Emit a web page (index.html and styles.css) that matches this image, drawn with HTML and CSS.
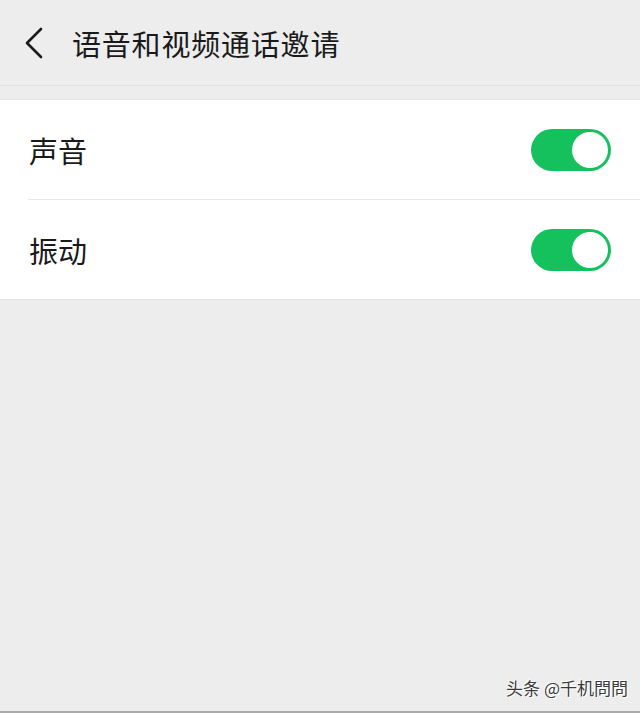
FILE: index.html
```html
<!DOCTYPE html>
<html lang="zh-CN">
<head>
  <meta charset="UTF-8" />
  <meta name="viewport" content="width=device-width, initial-scale=1.0"/>
  <title>语音和视频通话邀请</title>
  <link rel="stylesheet" href="styles.css">
</head>
<body>
  <div class="screen">
    <header class="top-bar">
      <span class="back">
        <svg width="20" height="32" viewBox="0 0 20 32">
          <path d="M17 2 L3 16 L17 30" fill="none" stroke="#1a1a1a" stroke-width="2.6" stroke-linecap="round" stroke-linejoin="round"/>
        </svg>
      </span>
      <h1 class="title">语音和视频通话邀请</h1>
    </header>

    <ul class="settings">
      <li class="row">
        <span class="label">声音</span>
        <span class="switch on"><span class="knob"></span></span>
      </li>
      <li class="row">
        <span class="label">振动</span>
        <span class="switch on"><span class="knob"></span></span>
      </li>
    </ul>

    <div class="watermark">头条 @千机問問</div>
  </div>
</body>
</html>
```

FILE: styles.css
```css
html, body {
  margin: 0;
  padding: 0;
}
body {
  font-family: "Noto Sans CJK SC", "Noto Sans", sans-serif;
  background: #ededed;
  color: #1a1a1a;
}
.screen {
  position: relative;
  width: 640px;
  height: 711px;
  border-bottom: 2px solid #a9a9a9;
  background: #ededed;
}
.top-bar {
  height: 86px;
  display: flex;
  align-items: center;
  border-bottom: 1px solid #e2e2e2;
  box-sizing: border-box;
}
.back {
  display: flex;
  width: 20px;
  margin-left: 24px;
  margin-right: 28px;
}
.title {
  margin: 0;
  font-size: 29px;
  font-weight: 400;
  letter-spacing: 0.8px;
}
.settings {
  list-style: none;
  margin: 13px 0 0;
  padding: 0;
  background: #fff;
  border-top: 1px solid #e3e3e3;
  border-bottom: 1px solid #e3e3e3;
}
.row {
  height: 99px;
  display: flex;
  align-items: center;
  justify-content: space-between;
  margin-left: 28px;
  padding-right: 29px;
}
.row + .row {
  border-top: 1px solid #e8e8e8;
}
.label {
  font-size: 29px;
  margin-left: 1px;
}
.switch {
  width: 80px;
  height: 42px;
  border-radius: 21px;
  background: #ddd;
  display: flex;
  align-items: center;
  padding: 0 3px;
  box-sizing: border-box;
}
.switch.on {
  background: #15c15d;
  justify-content: flex-end;
}
.knob {
  width: 36px;
  height: 36px;
  border-radius: 50%;
  background: #fff;
}
.watermark {
  position: absolute;
  right: 12px;
  bottom: 11px;
  font-size: 17px;
  color: #3a3a3a;
  text-shadow: 1px 1px 0 #fff, -1px -1px 0 #fff;
}
```
